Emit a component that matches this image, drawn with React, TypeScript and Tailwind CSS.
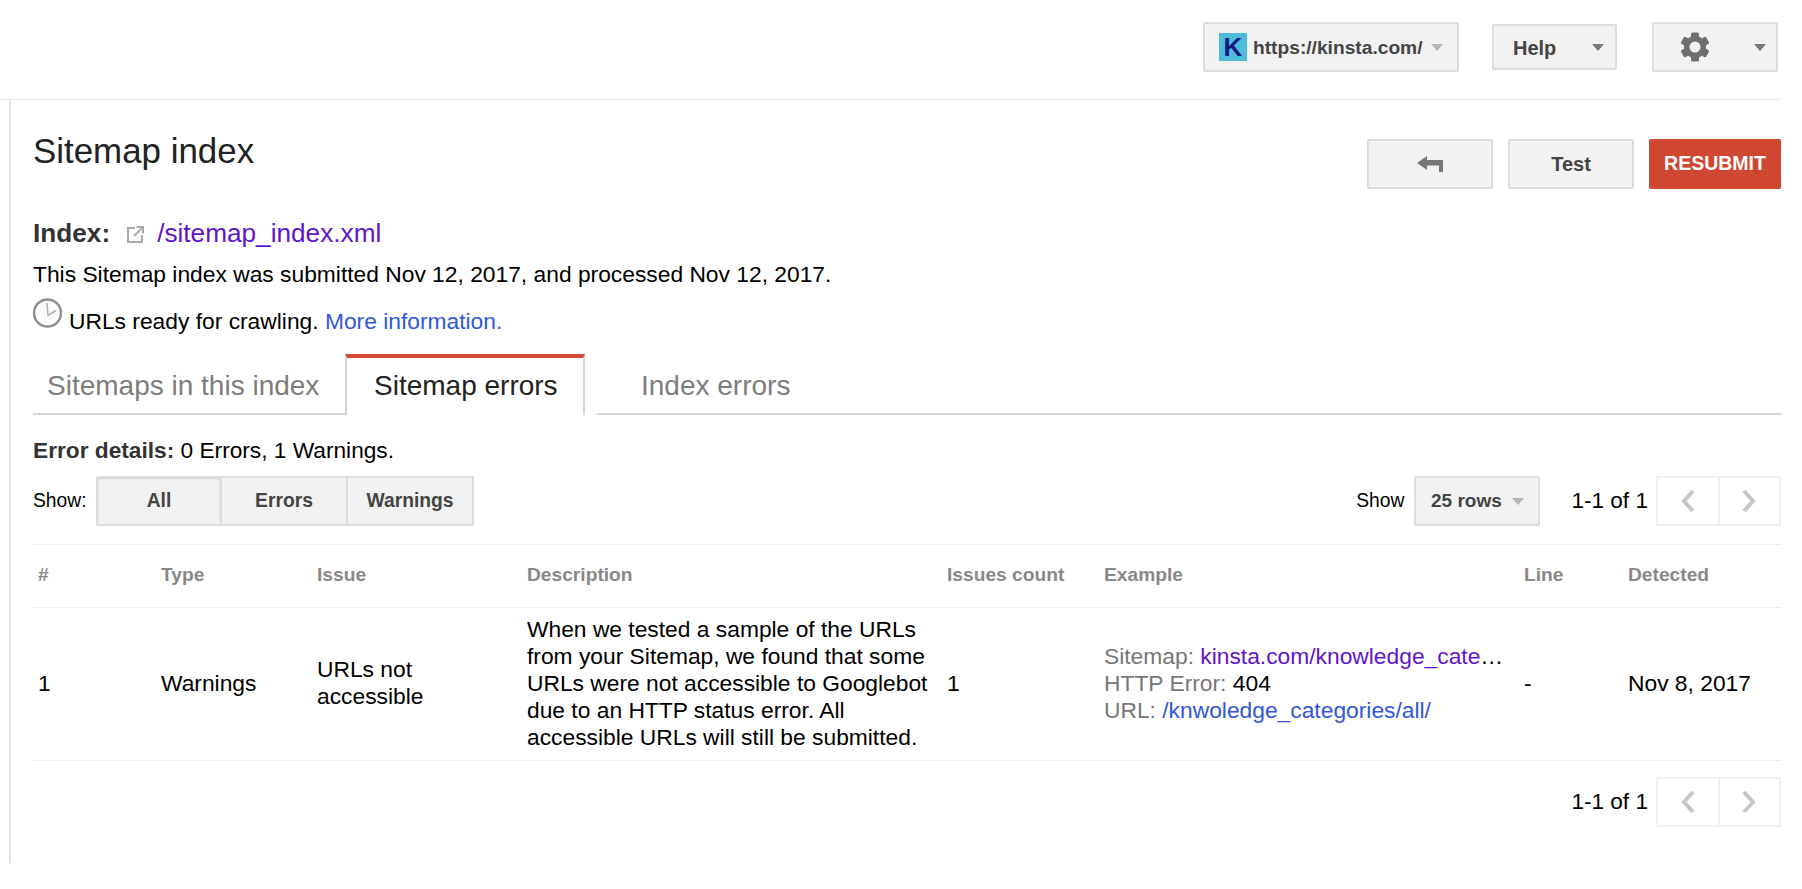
const FONT = "font-['Liberation_Sans',Arial,sans-serif]";

function Caret({ className = "border-t-[#777]" }: { className?: string }) {
  return <span className={`inline-block w-0 h-0 border-x-[6px] border-x-transparent border-t-[7px] ${className}`} />;
}

function Btn({ className = "", children }: { className?: string; children: React.ReactNode }) {
  return (
    <div className={`flex items-center rounded-[2px] border-2 border-[#dcdcdc] bg-[#f2f2f2] text-[#444] font-bold ${className}`}>
      {children}
    </div>
  );
}

function Gear() {
  return (
    <svg width="30" height="30" viewBox="0 0 30 30">
      {[0, 60, 120, 180, 240, 300].map((a) => (
        <rect key={a} x="11" y="0.5" width="8" height="8" rx="1.5" fill="#6f6f6f" transform={`rotate(${a} 15 15)`} />
      ))}
      <circle cx="15" cy="15" r="11" fill="#6f6f6f" />
      <circle cx="15" cy="15" r="5.5" fill="#f2f2f2" />
    </svg>
  );
}

function Pager() {
  return (
    <div className="flex items-center">
      <span className="text-[22.6px] text-black mr-[8px]">1-1 of 1</span>
      <div className="flex h-[50px] w-[125px] rounded-[2px] border-2 border-[#f0f0f0]">
        <div className="flex-1 flex items-center justify-center border-r-2 border-[#eeeeee]">
          <svg width="16" height="24" viewBox="0 0 16 24" fill="none">
            <path d="M13 2 L4 12 L13 22" stroke="#c6c6c6" strokeWidth="4" />
          </svg>
        </div>
        <div className="flex-1 flex items-center justify-center">
          <svg width="16" height="24" viewBox="0 0 16 24" fill="none">
            <path d="M3 2 L12 12 L3 22" stroke="#c6c6c6" strokeWidth="4" />
          </svg>
        </div>
      </div>
    </div>
  );
}

const COLS = "grid grid-cols-[128px_156px_210px_420px_157px_420px_104px_153px]";

export default function App() {
  return (
    <div className={`${FONT} bg-white w-[1802px] h-[889px] overflow-hidden text-black`}>
      {/* top bar */}
      <header className="h-[100px] w-[1781px] border-b border-[#e8e8e8] flex items-start pt-[22px] pr-[3px]">
        <div className="ml-auto flex items-start">
          <Btn className="w-[256px] h-[50px] pl-[14px]">
            <span className="w-[28px] h-[28px] bg-[#4dbcdc] text-[#161a7a] font-bold text-[26px] leading-[28px] text-center shrink-0">K</span>
            <span className="ml-[6px] mt-[2px] text-[19.2px] font-bold text-[#444]">https://kinsta.com/</span>
            <Caret className="ml-[8px] border-t-[#b5b5b5]" />
          </Btn>
          <Btn className="w-[125px] h-[46px] mt-[2px] ml-[33px] text-[20px] justify-between pl-[19px] pr-[11px]">
            <span className="mt-[2px]">Help</span>
            <Caret />
          </Btn>
          <Btn className="w-[126px] h-[50px] ml-[35px] justify-between pl-[26px] pr-[10px]">
            <Gear />
            <Caret />
          </Btn>
        </div>
      </header>

      <div className="ml-[9px] w-[1772px] h-[763px] border-l-2 border-[#e5e5e5] pl-[22px]">
        {/* title row */}
        <div className="flex items-start justify-between pt-[39px] h-[113px]">
          <h1 className="text-[34.9px] leading-[24px] mt-[-1px] pt-[1px] text-[#222] font-normal">Sitemap index</h1>
          <div className="flex gap-[15px]">
            <Btn className="w-[126px] h-[50px] justify-center">
              <svg width="26" height="18" viewBox="0 0 26 18">
                <path d="M0 8 L10 1 V5 H26 V17 H22 V10.5 H10 V15 Z" fill="#777" />
              </svg>
            </Btn>
            <Btn className="w-[126px] h-[50px] justify-center text-[20px]">Test</Btn>
            <div className="w-[132px] h-[50px] rounded-[2px] bg-[#cf4631] text-white font-bold text-[19.5px] flex items-center justify-center">RESUBMIT</div>
          </div>
        </div>

        <div className="flex items-center h-[40px] mt-[1px] text-[26.2px]">
          <span className="font-bold text-[#333]">Index:</span>
          <svg className="ml-[16px]" width="19" height="19" viewBox="0 0 19 19" fill="none">
            <path d="M9 3 H2 V17 H16 V10" stroke="#aaa" strokeWidth="2" />
            <path d="M8 11 L16 3 M10.5 2 H17 V8.5" stroke="#aaa" strokeWidth="2" />
          </svg>
          <a className="ml-[12px] text-[#5f14cc]">/sitemap_index.xml</a>
        </div>
        <p className="h-[34px] mt-[3px] text-[22.8px] leading-[34px]">
          This Sitemap index was submitted Nov 12, 2017, and processed Nov 12, 2017.
        </p>
        <div className="flex items-start h-[59px] text-[22.8px] mt-[5px]">
          <svg className="shrink-0 mt-[2px] -ml-[1px]" width="31" height="30" viewBox="0 0 31 30" fill="none">
            <circle cx="15.5" cy="15" r="13.5" fill="#fafafa" stroke="#8f8f8f" strokeWidth="2.4" />
            <path d="M15 5 L16 17.5 L24 12.5" stroke="#b0b0b0" strokeWidth="1.5" />
          </svg>
          <span className="ml-[6px] mt-[8px]">
            URLs ready for crawling. <a className="text-[#3058d8]">More information.</a>
          </span>
        </div>

        {/* tabs */}
        <div className="flex h-[61px] mt-[-1px] border-b-2 border-[#d5d5d5] text-[28px] relative">
          <div className="w-[312px] pl-[14px] pt-[11px] text-[#7d7d7d]">Sitemaps in this index</div>
          <div className="w-[240px] h-[61px] bg-white border-x-2 border-[#d5d5d5] border-t-4 border-t-[#d84a38] pl-[27px] pt-[7px] text-[#222] relative">
            Sitemap errors
            <span className="absolute left-[238px] top-[55px] w-[12px] h-[3px] bg-white" />
          </div>
          <div className="pl-[56px] pt-[11px] text-[#7d7d7d]">Index errors</div>
        </div>

        <p className="mt-[21px] text-[22.7px] leading-[28px]">
          <b className="text-[#333]">Error details:</b> 0 Errors, 1 Warnings.
        </p>

        {/* filter row */}
        <div className="flex items-center h-[50px] mt-[12px]">
          <span className="text-[19.3px] w-[63px]">Show:</span>
          <div className="flex text-[19.3px]">
            <Btn className="w-[126px] h-[50px] justify-center bg-[#e4e4e4] border-[#cfcfcf] text-[#333] rounded-r-none shadow-[inset_0_1px_2px_rgba(0,0,0,0.15)]">All</Btn>
            <Btn className="w-[126px] h-[50px] justify-center border-l-0 rounded-none">Errors</Btn>
            <Btn className="w-[126px] h-[50px] justify-center border-l-0 rounded-l-none">Warnings</Btn>
          </div>
          <span className="ml-auto text-[19.3px]">Show</span>
          <Btn className="w-[126px] h-[50px] justify-center ml-[10px] mr-[31px] text-[19px]">
            25 rows
            <Caret className="ml-[10px] border-t-[#b5b5b5]" />
          </Btn>
          <Pager />
        </div>

        {/* table */}
        <div className={`${COLS} mt-[18px] h-[64px] pb-[2px] border-y border-[#eeeeee] items-center text-[19.2px] font-bold text-[#888]`}>
          <div className="pl-[5px]">#</div>
          <div>Type</div>
          <div>Issue</div>
          <div>Description</div>
          <div>Issues count</div>
          <div>Example</div>
          <div>Line</div>
          <div>Detected</div>
        </div>
        <div className={`${COLS} h-[153px] pb-[2px] border-b border-[#eeeeee] items-center text-[22.8px] leading-[27px]`}>
          <div className="pl-[5px]">1</div>
          <div>Warnings</div>
          <div className="w-[150px]">URLs not accessible</div>
          <div className="w-[410px]">
            When we tested a sample of the URLs from your Sitemap, we found that some URLs were not accessible to Googlebot due to an HTTP status error. All accessible URLs will still be submitted.
          </div>
          <div>1</div>
          <div className="w-[400px]">
            <div className="truncate">
              <span className="text-[#777]">Sitemap: </span>
              <a className="text-[#5f14cc]">kinsta.com/knowledge_categories-sitemap.xml</a>
            </div>
            <div><span className="text-[#777]">HTTP Error: </span>404</div>
            <div><span className="text-[#777]">URL: </span><a className="text-[#3058d8]">/knwoledge_categories/all/</a></div>
          </div>
          <div>-</div>
          <div>Nov 8, 2017</div>
        </div>
        <div className="flex justify-end mt-[16px]">
          <Pager />
        </div>
      </div>
    </div>
  );
}
